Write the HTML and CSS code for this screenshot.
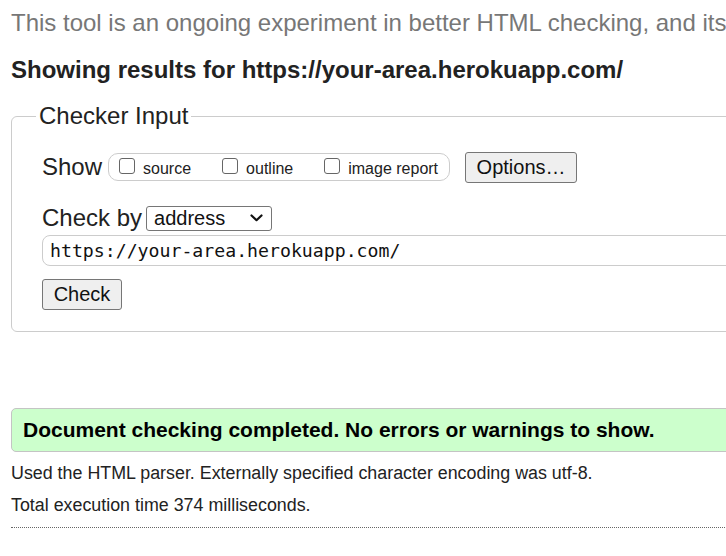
FILE: index.html
```html
<!DOCTYPE html>
<html lang="en">
<head>
<meta charset="utf-8">
<title>Nu Html Checker</title>
<link rel="stylesheet" href="styles.css">
</head>
<body>
<div class="page">
  <p class="intro">This tool is an ongoing experiment in better HTML checking, and its behavior remains subject to change</p>
  <p class="heading">Showing results for https://your-area.herokuapp.com/</p>

  <fieldset class="checker">
    <legend class="legend">Checker Input</legend>

    <div class="show-row">
      <span class="row-label">Show</span>
      <div class="group">
        <label class="opt"><span class="cb"></span><span class="opt-text">source</span></label>
        <label class="opt"><span class="cb"></span><span class="opt-text">outline</span></label>
        <label class="opt opt-last"><span class="cb"></span><span class="opt-text">image report</span></label>
      </div>
      <button class="btn btn-options" type="button">Options…</button>
    </div>

    <div class="checkby-row">
      <span class="row-label">Check by</span>
      <div class="select">
        <span class="select-text">address</span>
        <svg class="chevron" width="13" height="8" viewBox="0 0 13 8"><path d="M1.5 1.5 L6.5 6.2 L11.5 1.5" fill="none" stroke="#111" stroke-width="2.2" stroke-linecap="round" stroke-linejoin="round"/></svg>
      </div>
    </div>

    <div class="url-input">https://your-area.herokuapp.com/</div>

    <button class="btn btn-check" type="button">Check</button>
  </fieldset>

  <div class="success">Document checking completed. No errors or warnings to show.</div>
  <p class="meta">Used the HTML parser. Externally specified character encoding was utf-8.</p>
  <p class="meta">Total execution time 374 milliseconds.</p>
  <div class="rule"></div>
</div>
</body>
</html>
```

FILE: styles.css
```css
html, body {
  margin: 0;
  padding: 0;
  background: #fff;
  overflow: hidden;
}

body {
  font-family: "Liberation Sans", Arial, sans-serif;
  color: #222;
}

.page {
  width: 1100px;
  padding: 9px 0 0 11px;
}

.intro {
  margin: 0;
  font-size: 24px;
  line-height: 28px;
  color: #777;
  white-space: nowrap;
}

.heading {
  margin: 19px 0 0;
  font-size: 24px;
  line-height: 28px;
  font-weight: bold;
  color: #222;
  white-space: nowrap;
}

.checker {
  margin: 18px 0 0;
  padding: 0 30px 21px 30px;
  border: 1px solid #ccc;
  border-radius: 6px;
  min-width: 0;
}

.legend {
  margin-left: -6px;
  padding: 0 3px;
  font-size: 24px;
  line-height: 28px;
  color: #222;
}

.show-row {
  display: flex;
  align-items: center;
  height: 32px;
  margin-top: 21px;
}

.row-label {
  font-size: 24px;
  line-height: 28px;
  color: #222;
  white-space: nowrap;
}

.group {
  display: flex;
  align-items: center;
  box-sizing: border-box;
  height: 28px;
  margin-left: 6px;
  padding: 0 11px 0 10px;
  border: 1px solid #ccc;
  border-radius: 10px;
}

.opt {
  display: flex;
  align-items: center;
  margin-right: 31px;
  font-size: 16px;
  color: #222;
  white-space: nowrap;
}

.opt-last {
  margin-right: 0;
}

.cb {
  display: block;
  box-sizing: border-box;
  width: 16px;
  height: 16px;
  border: 1px solid #666;
  border-radius: 3px;
  background: #fff;
  margin-top: -3px;
}

.opt-text {
  margin-left: 8px;
  margin-top: 3px;
}

.btn {
  box-sizing: border-box;
  font-family: "Liberation Sans", Arial, sans-serif;
  font-size: 20px;
  color: #111;
  background: #efefef;
  border: 1px solid #767676;
  border-radius: 3px;
  padding: 0;
}

.btn-options {
  width: 112px;
  height: 31px;
  margin-left: 15px;
}

.checkby-row {
  display: flex;
  align-items: center;
  height: 28px;
  margin-top: 21px;
}

.select {
  display: flex;
  align-items: center;
  justify-content: space-between;
  box-sizing: border-box;
  width: 126px;
  height: 25px;
  margin-left: 4px;
  padding: 0 8px 0 7px;
  border: 1px solid #767676;
  border-radius: 3px;
  background: #fff;
}

.select-text {
  font-size: 20px;
  color: #111;
}

.chevron {
  display: block;
}

.url-input {
  box-sizing: border-box;
  width: 1000px;
  height: 31px;
  margin-top: 3px;
  padding: 0 7px;
  border: 1px solid #ccc;
  border-radius: 8px;
  font-family: "DejaVu Sans Mono", "Liberation Mono", monospace;
  font-size: 18.2px;
  line-height: 29px;
  color: #111;
  white-space: nowrap;
}

.btn-check {
  display: block;
  width: 80px;
  height: 31px;
  margin-top: 13px;
}

.success {
  box-sizing: border-box;
  height: 44px;
  margin-top: 76px;
  padding: 0 11px;
  border: 1px solid #c4c4c4;
  border-radius: 5px;
  background: #ccffcc;
  font-size: 21px;
  line-height: 42px;
  font-weight: bold;
  color: #000;
  white-space: nowrap;
}

.meta {
  margin: 11px 0 0;
  font-size: 17.85px;
  line-height: 21px;
  color: #222;
  white-space: nowrap;
}

.rule {
  margin-top: 11px;
  border-top: 1px dotted #666;
}
```
